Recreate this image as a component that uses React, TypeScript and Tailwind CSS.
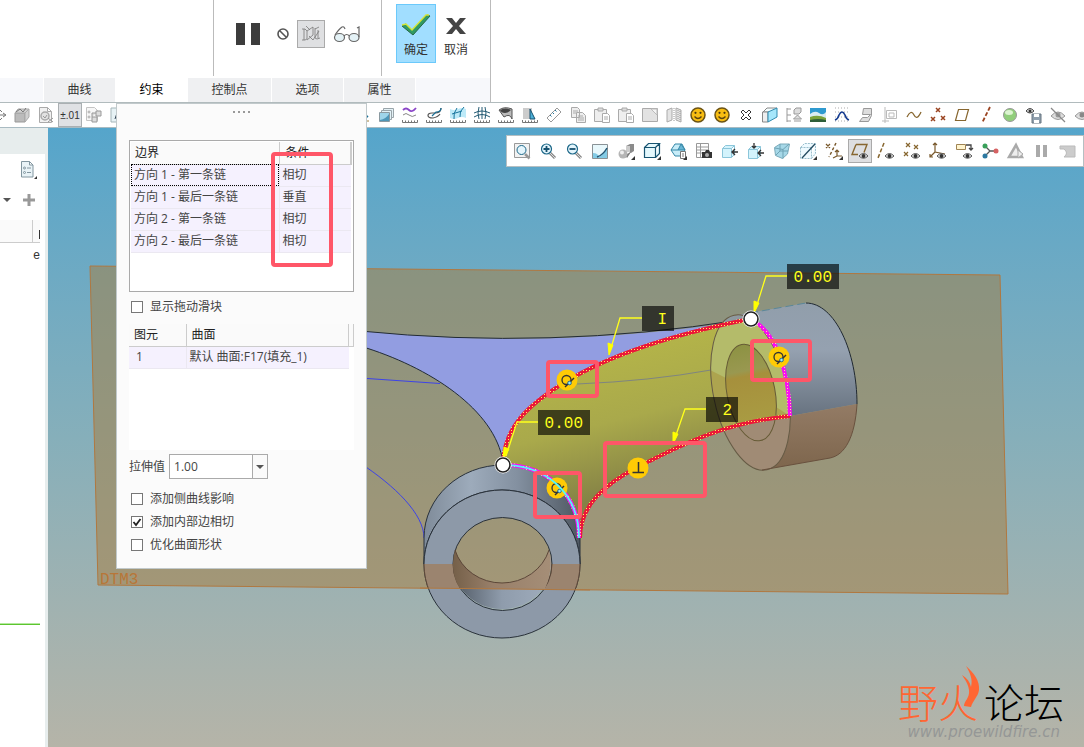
import { useState } from 'react';
import type { ReactNode } from 'react';

const boundaries = [
  { name: '方向 1 - 第一条链', condition: '相切' },
  { name: '方向 1 - 最后一条链', condition: '垂直' },
  { name: '方向 2 - 第一条链', condition: '相切' },
  { name: '方向 2 - 最后一条链', condition: '相切' },
];

const tabs = [
  { label: '曲线', width: 'w-[71px]' },
  { label: '约束', width: 'w-[71px]' },
  { label: '控制点', width: 'w-[83px]' },
  { label: '选项', width: 'w-[71px]' },
  { label: '属性', width: 'w-[71px]' },
];

// 16x16 的工具栏图标
const ruler = <path d="M.5 13v2.500h15V13M3.500 13.500v2M6.500 13.500v2M9.500 13.500v2M12.500 13.500v2" stroke="#777" />;
const eye = (
  <g>
    <path d="M7 13q4.500-5 9 0q-4.500 4.500-9 0z" fill="#eee" stroke="#555" />
    <circle cx="11.500" cy="13" r="2" fill="#333" />
  </g>
);
const corner = <path d="M17 13v4h-4z" fill="#333" />;
const smile = (
  <g>
    <circle cx="8" cy="8" r="7" fill="#f8bd12" stroke="#6b5314" strokeWidth="1.500" />
    <path d="M4.500 9.500q3.500 4 7 0" stroke="#5b4410" strokeWidth="1.300" />
    <circle cx="5.500" cy="5.800" r="1.100" fill="#4a3810" />
    <circle cx="10.500" cy="5.800" r="1.100" fill="#4a3810" />
  </g>
);
const lens = (
  <g>
    <path d="m10 10 5 5" stroke="#888" strokeWidth="3" />
    <path d="m10 10 5 5" stroke="#ddd" />
    <circle cx="6.500" cy="6" r="5" fill="#e4f5fc" stroke="#1c6788" strokeWidth="1.200" />
  </g>
);
const page = <path d="M1.500.5h8l4 4v11h-12zM9.500.5v4h4" fill="#f1f1f1" stroke="#aaa" />;

const icons: Record<string, ReactNode> = {
  move: <path d="M9 2v12M6 5l3-3 3 3M6 11l3 3 3-3M9 8h6M13 6l3 2-3 2" stroke="#777" />,
  box: (
    <g>
      <path d="M1 6h10v9H1z" fill="#bbb" stroke="#999" />
      <path d="m1 6 3-4h11l-4 4zM11 6l4-4v8l-4 5z" fill="#d0d0d0" stroke="#aaa" />
      <path d="m2 5 4-3 3 3 3-4" stroke="#777" />
    </g>
  ),
  refit: (
    <g>
      {page}
      <circle cx="7" cy="9" r="4" fill="#e2e2e2" stroke="#aaa" strokeWidth="1.500" />
      <path d="m5 9 2 2 2-3M10 11l5 4M15 11l-5 4" stroke="#999" />
    </g>
  ),
  tree: (
    <g>
      <path d="M.5.500h8l3 3v10H.5z" fill="#f7f7f7" stroke="#c4c4c4" />
      <circle cx="3" cy="5" r="1" stroke="#aaa" />
      <circle cx="3" cy="10" r="1" stroke="#aaa" />
      <path d="M6 10V6h4M10 4h5v5h-5zM6 10h5v5H6z" fill="#ddd" stroke="#999" />
    </g>
  ),
  letter: (
    <g>
      <path d="M1 1h14v14H1z" fill="#e7f2f5" stroke="#a5b5b9" />
      <path d="m5 12 3-9 3 9M6 9h4" stroke="#345" />
    </g>
  ),
  underline: (
    <g>
      <path d="m6 3 5 5 3 2" stroke="#176d95" strokeWidth="2" />
      <path d="M6 14h9" stroke="#a08040" />
    </g>
  ),
  layers: (
    <g>
      <path d="M5.500 1.500h10v9h-10z" fill="#e4f1f6" stroke="#9aa5aa" />
      <path d="M3.500 3.500h10v9h-10z" fill="#e4f3f8" stroke="#9aa5aa" />
      <path d="M1.500 5.500h10v9h-10z" fill="#9fd5ea" stroke="#8a99a0" />
      <path d="M2 13q6-1 9-6v7H2z" fill="#2c7ca3" opacity=".7" />
    </g>
  ),
  wave: (
    <g>
      {ruler}
      <path d="M1 3q3-3 6 0t7-2" stroke="#8b45c8" strokeWidth="1.800" />
      <path d="M1 8q3-3 6 0t7 0" stroke="#888" />
    </g>
  ),
  hook: (
    <g>
      {ruler}
      <path d="M15 1q0 5-6 5H6q-4 0-4 2.500T7 11q5-1 7-4" stroke="#555" strokeWidth="1.200" />
      <path d="M15 1q0 4-5 4l-4 4" stroke="#1c7197" strokeWidth="1.200" />
    </g>
  ),
  patch: (
    <g>
      <path d="M0 2q4 2 8 0t8 0v9q-4-2-8 0t-8 0z" fill="#bdeaf8" />
      {ruler}
      <path d="M7 1Q3 6 4 12M14 0Q9 4 10 10M2 7l10-3" stroke="#17759d" />
    </g>
  ),
  mesh: (
    <g>
      {ruler}
      <path d="M5 0q-2 6 0 12M11 0q2 6 0 12M8 0v12M0 6q8-4 16 0M0 10q8-5 16 0" stroke="#245b74" />
    </g>
  ),
  shade: (
    <g>
      {ruler}
      <path d="M1 3q5-4 13-1v10q-2-6-8-2z" fill="#bbb" stroke="#555" />
      <path d="M2 3q5-3 11 0-3 3-6 3Q3 6 2 3z" fill="#444" />
    </g>
  ),
  draft: (
    <g>
      {ruler}
      <path d="M1 1h9v11H1z" fill="#ccc" />
      <path d="m8 2 5 10H8z" fill="#4cb0d8" stroke="#174f6c" />
    </g>
  ),
  measure: (
    <g>
      <path d="m1 11 10-10 4 4L5 15z" fill="#fff" stroke="#999" />
      <path d="m4 8 1.500 1.500M6.500 5.500 8 7M9 3l1.500 1.500" stroke="#247aa0" />
    </g>
  ),
  copy: (
    <g>
      <path d="M1.500.5h6l2 2v8h-8zM6.500 5.500h6l3 3v7h-9z" fill="#eee" stroke="#aaa" />
      <path d="M3 4h5M3 6h3M8 9h5M8 11h6M8 13h6" stroke="#aaa" />
    </g>
  ),
  paste: (
    <g>
      <path d="M.5 2.500h12v12H.5z" fill="#eee" stroke="#aaa" />
      <path d="M4 1h5v3H4z" fill="#ddd" stroke="#aaa" />
      <path d="M8.500 6.500h5l2 2v7h-7z" fill="#fff" stroke="#aaa" />
      <path d="M10 10h4M10 12h4" stroke="#aaa" />
    </g>
  ),
  page2: (
    <g>
      <path d="M.5 1.500h15v13H.5z" fill="#e2e2e2" stroke="#aaa" />
      <path d="M9 2h6v6z" fill="#f4f4f4" stroke="#bbb" />
    </g>
  ),
  dots: (
    <g>
      <path d="m1 3 5-2v12l-5 2zM10 1l5 2v12l-5-2z" fill="#e4e4e4" stroke="#aaa" />
      <path d="M8 1v14M12 3v10M14 4v10" stroke="#999" strokeDasharray="1 1" />
    </g>
  ),
  smile,
  cross: <path d="m3 5 2-2 3 3 3-3 2 2-3 3 3 3-2 2-3-3-3 3-2-2 3-3z" fill="#fff" stroke="#333" />,
  solid: (
    <g>
      <path d="m1 5 4-4h10l-4 4z" fill="#f6ffff" stroke="#888" />
      <path d="M.5 5H6v10H.5z" fill="#eee" stroke="#888" />
      <path d="m6 5 9-4v9l-9 5z" fill="#a6e7fb" stroke="#318baf" />
    </g>
  ),
  swap: (
    <g>
      <path d="M1 1v14M1 2h4M1 8h4M1 14h4" stroke="#999" />
      <path d="m8 3 2-2h5v4l-2 2H8zM11.500 8l4 4H7.500zM8 14h7" fill="#ddd" stroke="#999" />
    </g>
  ),
  image: (
    <g>
      <path d="M0 1h16v8H0z" fill="#2f9ad0" />
      <path d="M0 7q5-4 9-1t7-1v8H0z" fill="#d9ecf2" />
      <path d="M0 10q8-3 16 1v4H0z" fill="#7ba33c" />
      <path d="M0 13q8-2 16 0v2H0z" fill="#2e5e38" />
    </g>
  ),
  curve: (
    <g>
      <path d="M1 1h15M1 5h15M1 10h15M1 14h15" stroke="#aaa" strokeDasharray="1 2" />
      <path d="M1 13q3-1 4-5 3-6 6 0 1 4 4 5" stroke="#173d91" strokeWidth="1.600" />
    </g>
  ),
  fold: <path d="M5.500 1.500h8v7l-3 6h-9l3-4h5l3-3h-8z" fill="#ddd" stroke="#999" />,
  section: <path d="M3 0v16M0 14h7M4.500 3.500h10v8h-10zM7 6h5v4H7z" stroke="#bbb" />,
  spline: <path d="M1 10q4-8 7-2t7-3" stroke="#87662f" strokeWidth="1.300" />,
  points: (
    <path
      d="m6 1 4 4M10 1 6 5M1 10l4 4M5 10l-4 4M11 9l4 4M15 9l-4 4"
      stroke="#9a4320"
      strokeWidth="1.500"
    />
  ),
  plane: <path d="M4.500 2.500h10l-3 11h-10z" stroke="#87662f" strokeWidth="1.200" />,
  axis: <path d="M12 0 4 16" stroke="#9a4320" strokeWidth="1.800" strokeDasharray="4 2" />,
  ball: (
    <g>
      <circle cx="8" cy="8" r="6.500" fill="#91ce7b" stroke="#999" />
      <ellipse cx="7" cy="5.500" rx="4" ry="2.500" fill="#dcf4d1" />
    </g>
  ),
  save: (
    <g>
      <path d="M0 4q4-5 8 0-4 4-8 0z" fill="#ddd" stroke="#444" />
      <circle cx="4" cy="4" r="1.500" fill="#333" />
      <path d="M6 7h9v9H6z" fill="#8f9fad" stroke="#687681" />
      <path d="M8 7h5v3H8zM8 13h5v3H8z" fill="#fff" />
    </g>
  ),
  hidden: (
    <g>
      <path d="M1 9q7-8 14 0-7 7-14 0z" fill="#ddd" stroke="#999" />
      <circle cx="8" cy="8" r="2.500" fill="#999" />
      <path d="m1 1 14 14" stroke="#888" strokeWidth="1.300" />
    </g>
  ),
  show: (
    <g>
      <path d="M1 9q7-8 14 0-7 7-14 0z" fill="#ddd" stroke="#999" />
      <circle cx="8" cy="8" r="2.500" fill="#888" />
    </g>
  ),
  // 视图工具栏
  zoomFit: (
    <g>
      <path d="M.5.500h15v14H.5z" fill="#f2f2f2" stroke="#999" />
      <path d="m11 11 4.500 4.500" stroke="#999" strokeWidth="2.500" />
      <circle cx="7.500" cy="7" r="4.500" fill="#e4f5fc" stroke="#1c6788" />
    </g>
  ),
  zoomIn: (
    <g>
      {lens}
      <path d="M6.500 3v6M3.500 6h6" stroke="#15506f" strokeWidth="1.800" />
    </g>
  ),
  zoomOut: (
    <g>
      {lens}
      <path d="M3.500 6h6" stroke="#15506f" strokeWidth="1.800" />
    </g>
  ),
  repaint: (
    <g>
      <path d="M.5 1.500h15v14H.5z" fill="#83cbe5" stroke="#8a9296" />
      <path d="M1 2h14v3Q12 11 7 14q-1-4-6-4z" fill="#e8f8fc" />
      <path d="M5 14q6-2 10-9" stroke="#235775" strokeWidth="1.500" />
    </g>
  ),
  render: (
    <g>
      <path d="M8 3 12 1h4v7l-3 2-5-2z" fill="#8b8b8b" />
      <path d="M8 3h4v6H8z" fill="#ccc" />
      <path d="m7 12 6-3-4 6z" fill="#777" />
      <circle cx="5" cy="11" r="4.500" fill="#b5b5b5" />
      <circle cx="4" cy="9.500" r="2" fill="#eee" />
      {corner}
    </g>
  ),
  cube: (
    <g>
      <path d="M.5 4.500h11v10H.5zM.5 4.500l4-4h11l-4 4M11.500 14.500l4-4V.5" fill="#e4f8fd" stroke="#185471" strokeWidth="1.200" />
      {corner}
    </g>
  ),
  views: (
    <g>
      <path d="m1 7 4-6h7l3 6-4 6H5z" fill="#c7ecf8" stroke="#3587a7" />
      <path d="M1 7h14M8 7l3-6 4 6" fill="#68b6d5" stroke="#3587a7" />
      <path d="M10.500 8.500h5v7h-5zM12 11h2M12 13h2" fill="#fff" stroke="#777" />
      {corner}
    </g>
  ),
  camera: (
    <g>
      <path d="M.5.500h12v14H.5zM1 4h12M1 7h12M1 10h12M4.500 1v13" fill="#fff" stroke="#999" />
      <path d="M6 9h3l1-2h3l1 2h2v6H6z" fill="#333" />
      <circle cx="11" cy="12" r="2" fill="#aaa" />
    </g>
  ),
  cubeRight: (
    <g>
      <path d="M.5 5.500h9v9h-9zM.5 5.500l3-3h9l-3 3M9.500 14.500l3-3v-9" fill="#d4f3fc" stroke="#8cc6da" />
      <path d="M16 9h-6M13 6l-3 3 3 3" stroke="#333" strokeWidth="1.400" />
    </g>
  ),
  cubeTop: (
    <g>
      <path d="M.5 6.500h9v9h-9zM.5 6.500l3-3h9l-3 3M9.500 15.500l3-3v-9" fill="#d4f3fc" stroke="#8cc6da" />
      <path d="M16 10h-6M13 7l-3 3 3 3M6 0v5M4 3l2 2 2-2" stroke="#333" strokeWidth="1.300" />
    </g>
  ),
  persp: (
    <g>
      <path d="M.5 4.500 6 1h9.500l-2 10-5 4.500-7-3z" fill="#a6d8e8" stroke="#7aaaba" />
      <path d="m1 5 8 1.500L15 1M9 6.500v9M6 1v7l-4 4M6 8h8" stroke="#6fa3b5" />
    </g>
  ),
  sectionCube: (
    <g>
      <path d="M.5 4.500h11v11H.5zM.5 4.500l4-4h11l-4 4M11.500 15.500l4-5V.5" fill="#eefaff" stroke="#9bbfcd" strokeDasharray="2 1" />
      <path d="M15 1 2 15" stroke="#234a60" strokeWidth="1.300" />
      {corner}
    </g>
  ),
  datum: (
    <g>
      <path d="m0 1 4 4M4 1 0 5M11 7v6h5M11 13l-4 2M9 9l2-2 2 2" stroke="#79592c" strokeWidth="1.200" />
      <path d="M10 0 3 14" stroke="#79592c" strokeWidth="1.400" strokeDasharray="3 2" />
      {corner}
    </g>
  ),
  planeView: (
    <g>
      <path d="M4 1.500h11l-3 8M4 1.500l-4 10h6" stroke="#87662f" strokeWidth="1.400" />
      {eye}
    </g>
  ),
  axisView: (
    <g>
      <path d="M6 0 0 15" stroke="#87662f" strokeWidth="1.500" strokeDasharray="4 2" />
      {eye}
    </g>
  ),
  pointView: (
    <g>
      <path d="m2 0 4 4M6 0 2 4M10 2l4 4M14 2l-4 4M0 9l4 4M4 9l-4 4" stroke="#87662f" strokeWidth="1.200" />
      {eye}
    </g>
  ),
  csysView: (
    <g>
      <path d="M5 0v9l10 2M5 9l-5 5M3 2l2-2 2 2M0 11v3h3" stroke="#79592c" strokeWidth="1.200" />
      {eye}
    </g>
  ),
  noteView: (
    <g>
      <path d="M.5 1.500h9v5h-9z" fill="#fff4ce" stroke="#a08555" />
      <path d="M10 2h5v5M13 5l2 2 2-2" stroke="#444" strokeWidth="1.300" />
      {eye}
    </g>
  ),
  network: (
    <g>
      <path d="m3 3 5 5-5 5M8 8h6" stroke="#555" strokeWidth="1.300" />
      <circle cx="3" cy="3" r="2.500" fill="#39a05a" />
      <circle cx="14" cy="8" r="2.500" fill="#d56263" />
      <circle cx="3" cy="13" r="2.500" fill="#2d79a1" />
    </g>
  ),
  triangle: (
    <g>
      <path d="m8 2 6 12H1z" fill="#eee" stroke="#aaa" strokeWidth="2.500" />
      <path d="m10 7 5 4-5 4z" fill="#eee" stroke="#aaa" />
    </g>
  ),
  pause: <path d="M2 2h4v12H2zM9 2h4v12H9z" fill="#aaa" />,
  back: <path d="M0 3h15v11H4q5-4 0-8H0z" fill="#ccc" stroke="#bbb" />,
};

const leftTools = ['move', 'box', 'refit', 'tolerance', 'tree', 'letter'];
const rightTools = [
  'underline', 'layers', 'wave', 'hook', 'patch', 'mesh', 'shade', 'draft', 'measure', 'copy',
  'paste', 'paste', 'page2', 'dots', 'smile', 'smile', 'cross', 'solid', 'swap', 'image',
  'curve', 'fold', 'section', 'spline', 'points', 'plane', 'axis', 'ball', 'save', 'hidden', 'show',
];
const viewTools = [
  'zoomFit', 'zoomIn', 'zoomOut', 'repaint', 'render', 'cube', 'views', 'camera', 'cubeRight',
  'cubeTop', 'persp', 'sectionCube', 'datum', 'planeView', 'axisView', 'pointView', 'csysView',
  'noteView', 'network', 'triangle', 'pause', 'back',
];

function Icon({ name }: { name: string }) {
  return (
    <svg viewBox="0 0 16 16" className="size-4 overflow-visible" fill="none" aria-hidden="true">
      {icons[name]}
    </svg>
  );
}

function ToolButton({ name }: { name: string }) {
  if (name === 'tolerance') {
    return (
      <button className="h-6 w-6 shrink-0 border border-[#aaafb2] bg-[#dfe1e4] font-['Liberation_Sans'] text-[10px] text-[#333]">
        ±.01
      </button>
    );
  }
  return (
    <button aria-label={name} className="flex h-6 w-6 shrink-0 items-center justify-center">
      <Icon name={name} />
    </button>
  );
}

function Ribbon() {
  return (
    <header className="flex border-b border-[#b1bbbd] bg-white">
      <div className="w-[491px] border-r border-[#bbb]">
        <div className="flex h-[78px] justify-end">
          <div className="mb-[2px] flex w-[168px] items-center border-l border-[#bbb] pb-2 pl-[22px]">
            <button aria-label="暂停" className="flex gap-[6px]">
              <span className="h-[22px] w-[9px] bg-[#3c3c3c]" />
              <span className="h-[22px] w-[9px] bg-[#3c3c3c]" />
            </button>
            <button aria-label="无预览" className="ml-[17px]">
              <svg viewBox="0 0 12 12" className="size-3" fill="none" stroke="#555" strokeWidth="1.600">
                <circle cx="6" cy="6" r="5" />
                <path d="m2.500 2.500 7 7" />
              </svg>
            </button>
            <button aria-label="预览" className="ml-2 flex size-7 items-center justify-center border border-[#aaa] bg-[#dfe0e2]">
              <svg viewBox="0 0 20 18" className="h-[18px] w-5" fill="none" stroke="#777" strokeWidth=".8">
                <path d="M1 4h3l2 2v8l-2 1H1M3 4v11M6 6l6-4v8l-6 5M14 3v10l2 1 3-1M14 4l4-2M17 5v8M8 11l4 4 6-9M5 1l4 4" />
              </svg>
            </button>
            <button aria-label="眼镜" className="ml-2">
              <svg viewBox="0 0 28 18" className="h-[18px] w-7" fill="#e4f2f6" stroke="#666" strokeWidth="1.200">
                <ellipse cx="6.500" cy="12.500" rx="5" ry="4" />
                <ellipse cx="21" cy="12.500" rx="5" ry="4" />
                <path d="M11 11q2.500-3 5.500 0M2 10q4-6 7-8 2-1 3 2M26 12V2l-2 1" fill="none" />
              </svg>
            </button>
          </div>
          <div className="mb-[2px] flex w-[109px] items-start border-l border-[#bbb] pt-1 pl-[14px]">
            <button className="flex h-[59px] w-10 flex-col items-center border border-[#6bc9fb] bg-[#a1deff] text-xs text-[#333]">
              <svg viewBox="0 0 30 22" className="mt-[9px] h-[22px] w-[30px]">
                <path d="m1 12 4-2 6 6L26 1l3 1-17 19z" fill="#2f9a63" stroke="#266846" />
                <path d="m1 11 4-1 6 6L25 1h3" fill="none" stroke="#d4e637" strokeWidth="1.500" />
              </svg>
              <span className="mt-[6px]">确定</span>
            </button>
            <button className="flex h-[59px] w-10 flex-col items-center text-xs text-[#333]">
              <svg viewBox="0 0 20 16" className="mt-[14px] h-4 w-5" fill="#444">
                <path d="M0 0h6l4 5 4-5h6l-7 8 7 8h-6l-4-5-4 5H0l7-8z" />
              </svg>
              <span className="mt-2">取消</span>
            </button>
          </div>
        </div>
        <nav className="flex h-6 gap-px text-xs text-[#333]">
          <div className="w-[43px] bg-[#f7f8fb]" />
          {tabs.map((tab) => (
            <button
              key={tab.label}
              className={`${tab.width} ${tab.label === '约束' ? 'bg-white text-black' : 'bg-[#eff0f2]'}`}
            >
              {tab.label}
            </button>
          ))}
          <div className="flex-1 bg-[#f7f8fb]" />
        </nav>
      </div>
    </header>
  );
}

function Check({ label, initial = false }: { label: string; initial?: boolean }) {
  const [checked, setChecked] = useState(initial);
  return (
    <label className="flex h-[23px] items-center pl-[2px]">
      <span className="grid size-3">
        <input
          type="checkbox"
          checked={checked}
          onChange={() => setChecked(!checked)}
          className="col-start-1 row-start-1 size-3 appearance-none border border-[#777] bg-white"
        />
        {checked && (
          <svg viewBox="0 0 12 12" className="pointer-events-none col-start-1 row-start-1 size-3" fill="none" stroke="#222" strokeWidth="1.800">
            <path d="m2.500 6 2.500 3 4.500-6" />
          </svg>
        )}
      </span>
      <span className="ml-[7px]">{label}</span>
    </label>
  );
}

function ConstraintPanel() {
  return (
    <section className="absolute top-[103px] left-[116px] z-10 w-[251px] border border-[#c1c9cb] bg-[#fbfbfb] px-3 pb-3 text-xs text-[#444]">
      <div className="flex h-9 justify-center gap-[3px] pt-[7px]">
        <span className="size-[2px] bg-[#999]" />
        <span className="size-[2px] bg-[#999]" />
        <span className="size-[2px] bg-[#999]" />
        <span className="size-[2px] bg-[#999]" />
      </div>

      {/* 边界条件 */}
      <div className="h-[152px] border border-[#aaa] bg-white p-px">
        <table className="w-full table-fixed border-collapse text-left">
          <thead>
            <tr className="h-[22px] border-b border-[#ccc] bg-[#fafafa] text-[#222]">
              <th className="w-[148px] border-r border-[#ccc] pl-1 font-normal">边界</th>
              <th className="border-r-2 border-[#ccc] pl-[6px] font-normal">条件</th>
            </tr>
          </thead>
          <tbody>
            {boundaries.map((row, index) => (
              <tr key={row.name} className="h-[22px] border-b border-[#ebe8f1] bg-[#f5f1fe]">
                <td
                  className={
                    index === 0
                      ? 'border-r border-[#ebe8f1] pl-[3px] outline-1 -outline-offset-1 outline-black outline-dotted'
                      : 'border-r border-[#ebe8f1] pl-[3px]'
                  }
                >
                  {row.name}
                </td>
                <td className="pl-[3px]">{row.condition}</td>
              </tr>
            ))}
          </tbody>
        </table>
      </div>

      <div className="pt-[3px] pb-[6px]">
        <Check label="显示拖动滑块" />
      </div>

      {/* 参考曲面 */}
      <div className="h-[126px] bg-white">
        <table className="w-full table-fixed border-collapse text-left">
          <thead>
            <tr className="h-[22px] border-b border-[#ccc] bg-[#fafafa] text-[#222]">
              <th className="w-[57px] border-r border-[#ccc] pl-[5px] font-normal">图元</th>
              <th className="border-r border-[#ccc] pl-[5px] font-normal">曲面</th>
              <th className="w-[5px] border-r border-[#ccc]" />
            </tr>
          </thead>
          <tbody>
            <tr className="h-[22px]">
              <td className="border-r border-b border-[#ebe8f1] bg-[#f5f1fe] pl-[7px]">1</td>
              <td className="border-b border-[#ebe8f1] bg-[#f5f1fe] pl-[3px]">默认 曲面:F17(填充_1)</td>
              <td />
            </tr>
          </tbody>
        </table>
      </div>

      <div className="mt-1 flex h-[25px] items-center">
        <label htmlFor="stretch">拉伸值</label>
        <div className="ml-1 grid h-full w-[99px]">
          <select
            id="stretch"
            className="col-start-1 row-start-1 appearance-none border border-[#aaa] bg-white pl-1"
          >
            <option>1.00</option>
          </select>
          <span className="pointer-events-none col-start-1 row-start-1 my-px mr-px flex w-[15px] items-center justify-center justify-self-end border-l border-[#aaa] bg-[#fafafa]">
            <svg viewBox="0 0 8 4" className="h-1 w-2">
              <path d="M0 0h8L4 4z" fill="#555" />
            </svg>
          </span>
        </div>
      </div>

      <div className="mt-2">
        <Check label="添加侧曲线影响" />
        <Check label="添加内部边相切" initial />
        <Check label="优化曲面形状" />
      </div>
    </section>
  );
}

function ModelTree() {
  return (
    <aside className="w-12 shrink-0 border-r-3 border-[#e7eded] bg-white font-['Liberation_Sans'] text-xs text-[#333]">
      <div className="h-[26px] bg-[#e7eded]" />
      <button aria-label="设置" className="mt-[7px] ml-5 block">
        <svg viewBox="0 0 18 20" className="h-5 w-[18px]" fill="none" stroke="#8296a0">
          <path d="M1.500.5h8l3.500 3.500v12H1.500zM9.500.5V4H13" fill="#e9f3f7" />
          <circle cx="4.500" cy="7" r="1" />
          <circle cx="4.500" cy="11.500" r="1" />
          <path d="M7 7h4M7 11.500h4" />
          <path d="M17 15v3h-3z" fill="#333" stroke="none" />
        </svg>
      </button>
      <div className="mt-[13px] flex items-center gap-3 pl-[3px]">
        <svg viewBox="0 0 8 4" className="h-1 w-2">
          <path d="M0 0h8L4 4z" fill="#555" />
        </svg>
        <svg viewBox="0 0 12 12" className="size-3">
          <path d="M4.500 0h3v4.500H12v3H7.500V12h-3V7.500H0v-3h4.500z" fill="#999" />
        </svg>
      </div>
      <div className="mt-[14px] flex h-[23px] w-10 border-b border-[#ccc] bg-[#fafafa]">
        <div className="w-[33px] border-r border-[#ccc]" />
        <div className="mt-[10px] ml-auto h-[9px] w-px bg-[#333]" />
      </div>
      <p className="mt-1 w-10 text-right">e</p>
      <div className="mt-[360px] h-[2px] w-10 border-t border-[#b5e8a0] bg-[#5cc52f]" />
    </aside>
  );
}

const edgeTop = 'M503 462C505 430 522 408 567 381C615 352 680 333 750 319';
const edgeRight = 'M750 319C775 330 789 370 790 416';
const edgeBottom = 'M790 416C730 422 690 440 638 467C605 484 580 505 580 538';
const edgeLeft = 'M503 465C545 465 579 492 579 538';
const surface =
  'M503 465C505 430 522 408 567 381C615 352 680 333 750 319C775 330 789 370 790 416C730 422 690 440 638 467C605 484 580 505 580 538C579 492 545 465 503 465Z';
const wall = 'M455 550A49 46 0 0 0 549 550A49 46 0 1 1 455 550Z';
const ring =
  'M424 564A78 74 0 1 1 580 564A78 74 0 1 1 424 564ZM453 564A49 46 0 1 0 552 564A49 46 0 1 0 453 564Z';

const dimensions = [
  { x: 538, y: 410, width: 52, text: '0.00', textX: 583, leader: 'M538 422H517L506 456', tip: 'M503 460L504 447L509 449Z' },
  { x: 787, y: 264, width: 52, text: '0.00', textX: 832, leader: 'M787 276H766L756 308', tip: 'M754 313L754 301L759 303Z' },
  { x: 642, y: 306, width: 32, text: 'I', textX: 667, leader: 'M642 318H620L611 348', tip: 'M609 355L608 343L613 345Z' },
  { x: 706, y: 397, width: 32, text: '2', textX: 732, leader: 'M706 409H685L675 438', tip: 'M673 444L673 432L678 434Z' },
];

const tangents = [
  [567, 380],
  [779, 357],
  [557, 488],
];

const marks = [
  { x: 548, y: 362, width: 49, height: 34 },
  { x: 752, y: 341, width: 58, height: 39 },
  { x: 605, y: 443, width: 100, height: 53 },
  { x: 535, y: 473, width: 45, height: 44 },
];

function Model() {
  return (
    <svg viewBox="48 128 1036 619" preserveAspectRatio="xMinYMin slice" className="absolute inset-0 size-full" fill="none">
      <defs>
        <linearGradient id="yellow" x1="600" y1="350" x2="635" y2="490" gradientUnits="userSpaceOnUse">
          <stop offset="0" stopColor="#b4b449" />
          <stop offset=".5" stopColor="#a9a94b" />
          <stop offset="1" stopColor="#858246" />
        </linearGradient>
        <linearGradient id="tube" x1="0" y1="303" x2="0" y2="420" gradientUnits="userSpaceOnUse">
          <stop offset="0" stopColor="#919eab" />
          <stop offset=".4" stopColor="#95a1b0" />
          <stop offset="1" stopColor="#65707d" />
        </linearGradient>
        <linearGradient id="tubeLow" x1="0" y1="405" x2="0" y2="465" gradientUnits="userSpaceOnUse">
          <stop offset="0" stopColor="#937b65" />
          <stop offset="1" stopColor="#7f674e" />
        </linearGradient>
        <linearGradient id="sleeve">
          <stop offset="0" stopColor="#7f8b99" />
          <stop offset=".3" stopColor="#9dabbb" />
          <stop offset=".6" stopColor="#8390a0" />
          <stop offset="1" stopColor="#4e5761" />
        </linearGradient>
        <linearGradient id="wallTop">
          <stop offset="0" stopColor="#756049" />
          <stop offset=".4" stopColor="#987f69" />
          <stop offset="1" stopColor="#a58e77" />
        </linearGradient>
        <linearGradient id="wallLow">
          <stop offset="0" stopColor="#4f5863" />
          <stop offset=".5" stopColor="#8f9cac" />
          <stop offset="1" stopColor="#a0adbd" />
        </linearGradient>
        <linearGradient id="bore" x1="0" y1="344" x2="0" y2="440" gradientUnits="userSpaceOnUse">
          <stop offset="0" stopColor="#8d9243" />
          <stop offset=".27" stopColor="#999850" />
          <stop offset=".33" stopColor="#a6903c" />
          <stop offset="1" stopColor="#aaa045" />
        </linearGradient>
        <pattern id="redDots" width="3" height="3" patternUnits="userSpaceOnUse">
          <rect width="3" height="3" fill="#ec1738" />
          <rect x="1" y="1" width="1" height="1" fill="#fff35c" />
        </pattern>
        <pattern id="pinkDots" width="3" height="3" patternUnits="userSpaceOnUse">
          <rect width="3" height="3" fill="#fb0cf4" />
          <rect x="1" y="1" width="1" height="1" fill="#ffd4a0" />
        </pattern>
        <clipPath id="surfaceClip">
          <path d={surface} />
        </clipPath>
        <clipPath id="faceClip">
          <ellipse cx="750.500" cy="392.500" rx="37" ry="79" transform="rotate(-12 750.500 392.500)" />
        </clipPath>
        <clipPath id="abovePlane">
          <path d="M400 564H600V590L400 588Z" />
        </clipPath>
      </defs>

      {/* 基准平面 DTM3 */}
      <path d="M90 266L1000 275L1008 594L98 585Z" fill="#a87c3c" fillOpacity=".5" stroke="#b07840" />
      <text x="100" y="584" fill="#b87638" fontSize="16" fontFamily="Liberation Mono, monospace">DTM3</text>

      {/* 相邻曲面 */}
      <path d="M360 331Q550 350 735 322L750 319C680 333 615 352 567 381C522 408 505 430 503 462C495 410 430 367 360 346Z" fill="#929de1" />
      <path d="M360 331Q550 350 740 320M360 346C430 367 495 410 503 462" stroke="#222b35" />
      <path d="M360 378L440 383.500M360 463C395 486 424 514 424 538" stroke="#3d43e8" />

      <path d={surface} fill="url(#yellow)" />
      <path d="M577 384Q650 381 711 370" stroke="#7f8580" />

      {/* 右侧圆管 */}
      <path d="M737 315L806 303C835 303 857 352 857 404L790 416C789 370 775 330 750 319C745 316 741 315 737 315Z" fill="url(#tube)" />
      <path d="M790 416L857 404C855 437 845 455 830 458L762 470C780 468 790 446 790 416Z" fill="url(#tubeLow)" />
      <ellipse cx="750.500" cy="392.500" rx="37" ry="79" transform="rotate(-12 750.500 392.500)" fill="#a08b75" />
      <path d="M719 327Q727 314 740 315L750 319L720 327Z" fill="#8e999f" />
      <g clipPath="url(#surfaceClip)">
        <ellipse cx="750.500" cy="392.500" rx="37" ry="79" transform="rotate(-12 750.500 392.500)" fill="#b4bb6a" />
        <path d="M710 370L726 378L776 407L790 416V440H700Z" fill="#ada44f" clipPath="url(#faceClip)" />
        <ellipse cx="751" cy="392.500" rx="24" ry="49" transform="rotate(-11 751 392.500)" fill="url(#bore)" />
      </g>
      <ellipse cx="751" cy="392.500" rx="24" ry="49" transform="rotate(-11 751 392.500)" stroke="#665b36" />
      <ellipse cx="750.500" cy="392.500" rx="37" ry="79" transform="rotate(-12 750.500 392.500)" stroke="#665b45" />
      <path d="M806 303C835 303 857 352 857 404" stroke="#202932" />
      <path d="M750 313L806 303" stroke="#5b8799" strokeDasharray="8 4" />
      <path d="M857 404C855 437 845 455 830 458L762 470" stroke="#69513e" />

      {/* 左侧圆环 */}
      <path d="M424 564V538C424 497 460 465 503 465C545 465 579 492 580 538V564A78 74 0 0 0 424 564Z" fill="url(#sleeve)" stroke="#29313a" />
      <path d={wall} fill="url(#wallLow)" />
      <path d={ring} fill="#8d99a8" fillRule="evenodd" stroke="#29313a" />
      <g clipPath="url(#abovePlane)">
        <path d={ring} fill="#9b846f" fillRule="evenodd" stroke="#5d4737" />
      </g>
      <path d="M455 550A49 46 0 0 0 549 550Q554 568 545 589H460Q449 571 455 550Z" fill="url(#wallTop)" />
      <path d="M455 550A49 46 0 0 0 549 550" stroke="#5d4737" />
      <path d="M420 588L590 590" stroke="#b07840" />

      {/* 边界链 */}
      <path d={edgeTop} stroke="url(#redDots)" strokeWidth="4" />
      <path d={edgeBottom} stroke="url(#redDots)" strokeWidth="4" />
      <path d={edgeRight} stroke="url(#pinkDots)" strokeWidth="4" />
      <path d={edgeLeft} stroke="url(#pinkDots)" strokeWidth="4" />

      {dimensions.map((d) => (
        <g key={d.leader}>
          <rect x={d.x} y={d.y} width={d.width} height="25" fill="#000" fillOpacity=".64" />
          <text x={d.textX} y={d.y + 18} textAnchor="end" fill="#ffff1c" fontSize="16" fontFamily="Liberation Mono, monospace">
            {d.text}
          </text>
          <path d={d.leader} stroke="#ffff1c" strokeWidth="1.300" />
          <path d={d.tip} fill="#ffff00" stroke="#ffff00" />
        </g>
      ))}

      {/* 约束标记 */}
      {tangents.map(([x, y]) => (
        <g key={x} transform={`translate(${x} ${y})`}>
          <circle r="10.500" fill="#ffcb05" />
          <circle cx="-.5" cy="0" r="4.500" stroke="#333" strokeWidth="1.300" />
          <path d="M-2 7L7-2" stroke="#333" strokeWidth="1.500" />
          <circle cx="2.500" cy="3" r="1.800" fill="#9be8ff" stroke="#236b8c" />
        </g>
      ))}
      <circle cx="638" cy="468" r="10.500" fill="#ffcb05" />
      <path d="M632.500 472.500H644M638.500 472V462" stroke="#333" strokeWidth="1.500" />
      <path d={edgeLeft} stroke="#54f5fa" strokeWidth="1.800" />
      {[[503, 465], [751, 319]].map(([x, y]) => (
        <g key={x}>
          <circle cx={x} cy={y} r="8.500" fill="#fff" />
          <circle cx={x} cy={y} r="7" fill="#fff" stroke="#222" strokeWidth="1.600" />
        </g>
      ))}
      {marks.map((m) => (
        <rect key={m.x} {...m} rx="2" stroke="#ff5668" strokeWidth="4" />
      ))}
    </svg>
  );
}

function Watermark() {
  return (
    <div className="absolute right-5 bottom-[6px] flex flex-col items-end">
      <div className="flex font-['Noto_Sans_CJK_SC',sans-serif] text-[40px] leading-[44px] font-light">
        <span className="text-[#ff6633]">野火</span>
        <span className="ml-[6px] text-black">论坛</span>
      </div>
      <svg viewBox="0 0 20 44" className="absolute -top-[13px] left-[62px] h-11 w-5">
        <path d="M6 0c8 7 14 15 13 24-1 7-6 10-8 17l-7-1c0-5 6-8 5-16-1-7-4-10-7-15 5 3 8 7 9 12 2-8-1-14-5-21z" fill="#ff6633" />
      </svg>
      <p className="mr-1 font-['DejaVu_Sans'] text-[15px] leading-[18px] text-[#959796] italic">
        www.proewildfire.cn
      </p>
    </div>
  );
}

export default function App() {
  return (
    <div className="relative flex min-h-screen flex-col overflow-hidden bg-white font-['Open_Sans','Noto_Sans_CJK_SC',sans-serif]">
      <Ribbon />
      <div className="flex h-[25px] overflow-hidden border-b border-[#a9bbc2] bg-white">
        <div className="-ml-[14px] flex shrink-0">
          {leftTools.map((name) => (
            <ToolButton key={name} name={name} />
          ))}
        </div>
        <div className="ml-[220px] flex shrink-0">
          {rightTools.map((name, index) => (
            <ToolButton key={index} name={name} />
          ))}
        </div>
      </div>
      <main className="flex flex-1">
        <ModelTree />
        <div className="relative flex-1 overflow-hidden bg-linear-to-b from-[#55a5cb] via-[#86afba] to-[#b5b4a8]">
          <Model />
          <div className="absolute top-[7px] right-0 flex border border-[#b5bfc2] bg-white px-[2px] py-[3px]">
            {viewTools.map((name) => (
              <button
                key={name}
                aria-label={name}
                className={
                  name === 'planeView'
                    ? 'mx-px flex h-6 w-6 items-center justify-center border border-[#aaa] bg-[#dedfe1]'
                    : 'mx-px flex h-6 w-6 items-center justify-center'
                }
              >
                <Icon name={name} />
              </button>
            ))}
          </div>
          <Watermark />
        </div>
      </main>
      <ConstraintPanel />
      {/* 条件列的红色标注框 */}
      <div className="pointer-events-none absolute top-[152px] left-[271px] z-20 h-[115px] w-[62px] rounded border-4 border-[#ff5668]" />
    </div>
  );
}
